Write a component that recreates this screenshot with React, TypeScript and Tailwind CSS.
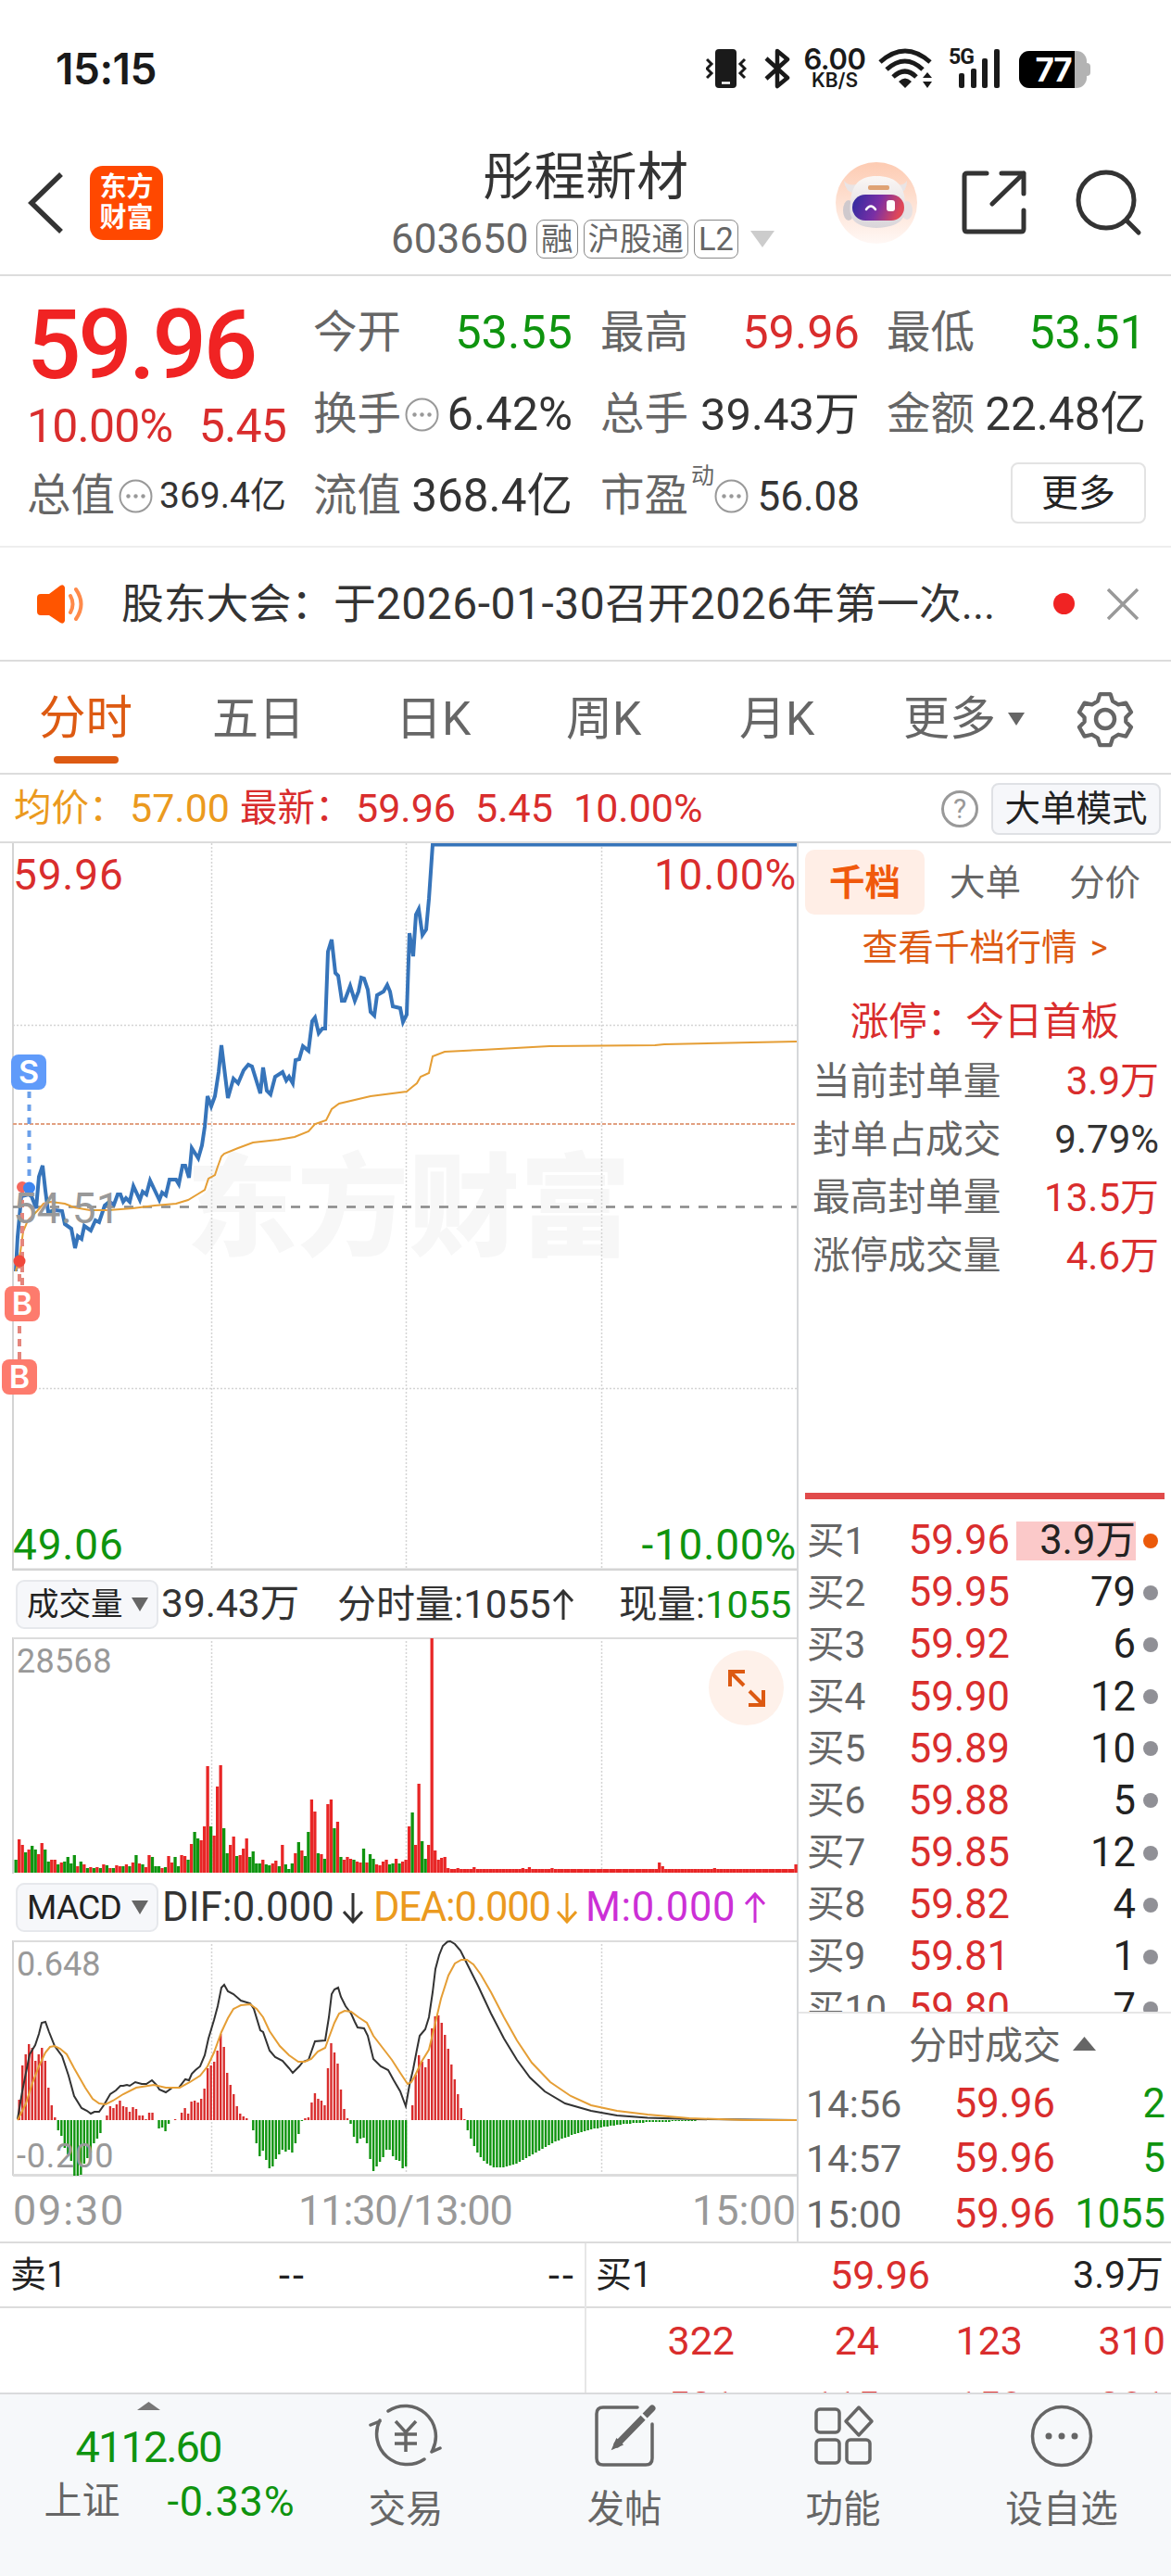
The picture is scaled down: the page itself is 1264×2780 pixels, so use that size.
import type { ReactNode } from "react";

const RED = "#d92d2d";
const GREEN = "#0f940f";

/** Volumen por minuto: positivo = rojo, negativo = verde. */
const VOLUME = [
  -14, 36, 30, -22, 25, -29, -25, 20, 32, -25, -12, 14, 14, -9, 11, -12, -17, -10, -19, 7, -12, 9, -5, 6, -5, 6, -5, 9, -8, 5,
  -5, 8, 7, -7, 9, -7, 11, -19, 10, -9, 6, 19, -17, -7, -7, 5, -6, 18, 11, -17, -7, 19, 18, -14, 31, -44, -37, 35, 50, 115,
  -50, 40, 93, 116, -48, -21, 30, 39, -18, 19, 26, 37, -17, -23, -10, -10, 14, -9, -8, 10, 13, -7, 30, -9, -4, -10, 21, -33, 24, -18,
  -44, 79, 66, -21, 20, -15, 74, 79, -48, 55, -17, 14, 17, 15, -14, 12, 11, -26, 11, -20, -15, 9, 8, 12, 14, -9, -10, 15, -10, 12,
  14, 50, -65, 30, 96, -34, -15, 30, 253, 24, 14, 16, 17, 5,
];

const VOLUME_BUMPS: Record<number, number> = { 136: 5, 141: 6, 156: 5, 158: 6, 165: 5, 198: 11, 199: 7, 215: 5, 240: 9 };

const MACD = [
  0, 22, 59, 71, 82, 78, 64, 71, 78, 64, 35, 16, 3, -11, -17, -30, -37, -44, -60, -60, -59, -47, -41, -35, -25, -20, -14, 0, 5, 15,
  13, 17, 21, 15, 14, 9, 14, 12, 5, 5, 1, 8, 8, 0, -9, -8, -12, -4, 0, 1, 0, 8, 13, 7, 20, 21, 19, 23, 34, 56,
  59, 63, 75, 93, 79, 51, 38, 28, 15, 7, 4, 2, 0, -11, -25, -39, -33, -43, -52, -50, -42, -37, -32, -34, -32, -35, -25, -15, -1, 2,
  3, 19, 29, 23, 21, 16, 56, 83, 73, 61, 33, 12, 2, -4, -18, -25, -20, -19, -25, -42, -55, -50, -45, -40, -32, -32, -39, -43, -44, -52,
  -50, 0, 16, 49, 70, 63, 57, 66, 99, 112, 113, 105, 92, 77, 60, 44, 28, 13, 1, -11, -20, -28, -35, -40, -44, -47, -49, -51, -51, -51,
  -51, -50, -49, -48, -47, -45, -43, -41, -39, -37, -35, -33, -31, -29, -27, -25, -23, -22, -20, -19, -18, -16, -15, -14, -13, -12, -11, -10, -9, -9,
  -8, -7, -7, -6, -6, -5, -5, -4, -4, -4, -3, -3, -3, -3, -2, -2, -2, -2, -2, -2, -2, -2, -1, -1, -1, -1, -1, -1, -1, -1,
];

const PRICE_LINE =
  "17,462 19,425 23,381 27,380 31,379 34,381 39,394 42,360 46,348 49,375 52,398 60,396 67,397 70,411 77,416 81,437 84,424 88,427 91,413 98,418 103,407 107,409 113,391 118,387 123,390 127,379 130,379 133,387 136,383 140,387 144,370 151,385 154,376 158,379 162,364 172,385 175,377 179,380 183,363 190,363 193,368 197,348 200,348 204,361 207,329 214,340 218,326 221,306 224,273 228,284 232,273 236,247 239,218 246,275 252,254 257,259 263,245 268,239 272,241 281,270 284,242 288,267 292,271 297,252 305,247 309,256 312,252 316,259 319,234 323,233 327,219 333,224 337,192 340,188 344,205 348,200 351,200 354,117 358,104 362,140 365,143 369,170 372,170 378,154 383,170 387,160 390,145 393,146 397,158 400,182 404,186 407,164 414,160 418,153 421,160 424,176 432,178 435,193 439,185 442,97 446,122 449,77 452,71 456,99 460,93 463,60 467,1.5 860,1.5";
const AVG_LINE =
  "17,462 22,441 25,419 30,407 40,397 47,389 55,387 70,389 80,393 97,396 117,396 143,394 167,391 190,389 203,385 213,379 221,374 225,362 232,358 235,349 239,338 242,335 257,329 273,323 300,320 318,317 333,311 340,303 352,299 358,287 366,281 400,273 439,268 445,263 450,259 454,252 463,248 467,230 480,225 520,223 593,219 707,218 717,217 860,214";
const DIF_LINE =
  "19,193 24,163 32,123 38,113 42,101 45,89 49,88 53,99 59,114 67,125 74,146 80,168 88,181 94,184 98,187 102,185 107,185 112,178 119,166 125,162 130,157 133,157 137,156 140,157 146,153 153,155 158,155 164,151 169,156 172,161 179,164 186,159 193,159 200,150 204,151 207,144 211,140 216,136 221,124 225,106 231,86 235,71 239,51 242,48 246,55 252,58 260,65 270,68 274,74 281,97 284,99 291,119 297,126 305,130 312,138 316,143 323,136 327,131 333,129 340,109 351,108 355,83 358,58 361,53 365,51 368,61 373,71 379,79 383,88 386,94 393,95 397,103 403,128 411,136 419,140 425,151 432,163 438,179 442,156 446,139 450,118 453,103 459,96 463,83 467,56 470,31 474,16 478,6 483,1.5 486,1 491,4 497,11 502,21 516,49 530,79 544,106 558,129 572,148 588,163 610,176 638,184 666,189 699,191.5 749,193 860,194";
const DEA_LINE =
  "19,194 28,176 35,154 42,136 49,121 54,115 59,114 65,117 72,123 80,138 92,159 100,171 107,176 114,177 122,173 133,166 147,159 166,156 179,159 194,159 205,153 216,146 224,136 231,121 239,99 246,84 252,74 260,70 270,69 277,74 284,83 291,98 302,114 312,124 322,131 329,131 336,128 343,120 351,116 355,105 361,89 366,79 372,76 379,77 387,83 396,89 403,103 413,116 423,129 432,143 440,155 444,153 448,146 455,131 463,118 469,93 476,63 484,38 491,25 498,21 504,21 511,26 519,37 530,56 544,83 558,108 574,132 594,153 616,168 638,178 666,184 699,188 744,192 805,194 860,194";

const BIDS = [
  ["买1", "59.96", "3.9万"],
  ["买2", "59.95", "79"],
  ["买3", "59.92", "6"],
  ["买4", "59.90", "12"],
  ["买5", "59.89", "10"],
  ["买6", "59.88", "5"],
  ["买7", "59.85", "12"],
  ["买8", "59.82", "4"],
  ["买9", "59.81", "1"],
  ["买10", "59.80", "7"],
];

const TRADES = [
  ["14:56", "59.96", "2"],
  ["14:57", "59.96", "5"],
  ["15:00", "59.96", "1055"],
];

const SEAL = [
  { label: "当前封单量", value: "3.9万", color: "text-[#d92d2d]" },
  { label: "封单占成交", value: "9.79%", color: "text-[#333]" },
  { label: "最高封单量", value: "13.5万", color: "text-[#d92d2d]" },
  { label: "涨停成交量", value: "4.6万", color: "text-[#d92d2d]" },
];

function StatusBar() {
  return (
    <div className="flex h-[150px] items-start pl-[60px] text-[#1a1a1a]">
      <div className="mt-[48px] w-[702px] font-['Inter'] text-[46px] leading-[52px] font-semibold tracking-[-0.5px]">15:15</div>
      <svg className="mt-[52px] h-[44px] w-[44px]" viewBox="0 0 44 44" fill="none" stroke="#1a1a1a" strokeWidth="3">
        <rect x="10" y="1" width="23" height="42" rx="4" fill="#1a1a1a" stroke="none" />
        <path d="M17 37.500h9" stroke="#fff" strokeWidth="2.500" />
        <path d="M1 12l5 5-5 5 5 5-5 5M42 12l-5 5 5 5-5 5 5 5" />
      </svg>
      <svg className="mt-[52px] ml-[19px] h-[44px] w-[28px]" viewBox="0 0 28 44" fill="none" stroke="#1a1a1a" strokeWidth="4.500" strokeLinejoin="round">
        <path d="M2 11l23 21-11 9V3l11 9L2 33" />
      </svg>
      <div className="mt-[49px] ml-[11px] flex w-[74px] flex-col items-center font-['Inter'] font-semibold">
        <span className="text-[31px] leading-[29px] tracking-[-0.4px]">6.00</span>
        <span className="text-[21px] leading-[18px]">KB/S</span>
      </div>
      <svg className="mt-[52px] ml-[10px] h-[44px] w-[60px]" viewBox="0 0 60 44" fill="none" stroke="#1a1a1a" strokeWidth="5">
        <path d="M2 15Q29-9 56 15M9 23Q29 5 48 23M16 31Q29 19 41 31" />
        <path d="M22 36q7-7 14 0l-7 7z" fill="#1a1a1a" stroke="none" />
        <path d="M48 32l5-6 5 6zM48 36h10l-5 7z" fill="#1a1a1a" stroke="none" />
      </svg>
      <div className="relative mt-[52px] ml-[16px] h-[44px] w-[58px]">
        <span className="absolute top-0 left-0 font-['Roboto'] text-[23px] leading-[20px] font-bold tracking-[-1px]">5G</span>
        <svg className="h-[44px] w-[58px]" viewBox="0 0 58 44" fill="#1a1a1a">
          <rect x="11" y="27" width="6" height="16" rx="2" />
          <rect x="24" y="22" width="6" height="21" rx="2" />
          <rect x="36" y="11" width="6" height="32" rx="2" />
          <rect x="49" y="1" width="6" height="42" rx="2" />
        </svg>
      </div>
      <div className="mt-[55px] ml-[18px] flex items-center">
        <div className="h-[40px] w-[73px] overflow-hidden rounded-[11px] bg-[#b3b3b3]">
          <div className="h-full w-[60px] bg-black pr-[4px] text-right font-['Inter'] text-[35px] leading-[41px] font-bold tracking-[-1.5px] text-white">77</div>
        </div>
        <div className="h-[14px] w-[4px] rounded-r-[4px] bg-[#b3b3b3]" />
      </div>
    </div>
  );
}

function Tag({ children }: { children: ReactNode }) {
  return (
    <span className="flex h-[42px] shrink-0 items-center rounded-[8px] border-[1.5px] border-[#888] px-[4px] text-[34.500px] leading-none whitespace-nowrap">{children}</span>
  );
}

function Robot() {
  return (
    <svg className="h-[88px] w-[88px]" viewBox="0 0 88 88">
      <defs>
        <linearGradient id="halo" x1="0" y1="0" x2="0" y2="1">
          <stop offset="0" stopColor="#fdcbb2" />
          <stop offset="1" stopColor="#fff8f5" />
        </linearGradient>
        <linearGradient id="visor" x1="0" y1="0" x2="1" y2="0.200">
          <stop offset="0" stopColor="#2b2ba0" />
          <stop offset="0.550" stopColor="#7a2fa5" />
          <stop offset="1" stopColor="#e04858" />
        </linearGradient>
        <linearGradient id="shell" x1="0" y1="0" x2="0" y2="1">
          <stop offset="0" stopColor="#fbf7f5" />
          <stop offset="1" stopColor="#d9d5da" />
        </linearGradient>
      </defs>
      <circle cx="44" cy="44" r="44" fill="url(#halo)" />
      <ellipse cx="14" cy="52" rx="6" ry="11" fill="#cfc9cd" />
      <ellipse cx="77" cy="52" rx="6" ry="10" fill="#e6e1e3" />
      <path d="M9 20q1 12 12 14l8-12q-14 6-20-2zM77 20q0 12-9 14l-8-12q12 6 17-2z" fill="#e9e4e5" />
      <path d="M44 15c20 0 30 9 31 28 3 18-6 27-31 28-22-1-31-9-28-27 1-20 10-29 28-29z" fill="url(#shell)" />
      <rect x="35" y="25" width="23" height="5" rx="2" fill="#dfa274" />
      <rect x="18" y="35" width="56" height="28" rx="14" fill="url(#visor)" />
      <path d="M33 51q5-7 10 0" fill="none" stroke="#fff" strokeWidth="2.500" strokeLinecap="round" />
      <rect x="55" y="41" width="9" height="12" rx="3" fill="#fff" />
    </svg>
  );
}

function Header() {
  return (
    <div className="flex h-[148px] items-start border-b-2 border-[#dcdcdc] text-[#333]">
      <svg className="mt-[36px] ml-[29px] h-[66px] w-[42px]" viewBox="0 0 42 66" fill="none" stroke="#333" strokeWidth="5.500">
        <path d="M37 2L5 33l32 31" />
      </svg>
      <div className="mt-[29px] ml-[26px] flex h-[80px] w-[79px] flex-col items-center justify-center rounded-[14px] bg-[#ff4800] text-[29px] leading-[33px] font-bold text-white">
        <span>东方</span>
        <span>财富</span>
      </div>
      <div className="ml-[246px] flex w-[424px] flex-col">
        <div className="mt-[12px] pl-[99px] text-[55.500px] leading-[60px]">彤程新材</div>
        <div className="mt-[13px] flex h-[46px] items-center text-[#666]">
          <span className="w-[157px] shrink-0 text-[44px] leading-none">603650</span>
          <div className="flex shrink-0 gap-[6px]">
            <Tag>融</Tag>
            <Tag>沪股通</Tag>
            <Tag>L2</Tag>
          </div>
          <svg className="ml-[13px] h-[18px] w-[26px] shrink-0" viewBox="0 0 26 18" fill="#ccc">
            <path d="M0 0h26L13 18z" />
          </svg>
        </div>
      </div>
      <div className="mt-[25px] ml-[56px]">
        <Robot />
      </div>
      <svg className="mt-[33px] ml-[48px] h-[70px] w-[70px]" viewBox="0 0 70 70" fill="none" stroke="#333" strokeWidth="5" strokeLinecap="round" strokeLinejoin="round">
        <path d="M27 4H6q-3 0-3 3v57q0 3 3 3h58q3 0 3-3V44M43 4h24v22M67 4L33 37" />
      </svg>
      <svg className="mt-[31px] ml-[51px] h-[74px] w-[74px]" viewBox="0 0 74 74" fill="none" stroke="#333" strokeWidth="5" strokeLinecap="round">
        <circle cx="35" cy="35" r="30" />
        <path d="M57 57l13 13" />
      </svg>
    </div>
  );
}

function MoreDot() {
  return (
    <svg className="ml-[4px] h-[37px] w-[37px] shrink-0" viewBox="0 0 37 37" fill="none" stroke="#999" strokeWidth="2">
      <circle cx="18.500" cy="18.500" r="17" />
      <g fill="#999" stroke="none">
        <circle cx="10.500" cy="18.500" r="2.200" />
        <circle cx="18.500" cy="18.500" r="2.200" />
        <circle cx="26.500" cy="18.500" r="2.200" />
      </g>
    </svg>
  );
}

function Stat({ label, value, color = "text-[#333]", size = "text-[50.500px]", info, sup }: { label: string; value: string; color?: string; size?: string; info?: boolean; sup?: string }) {
  return (
    <div className="flex h-[88px] w-[280px] items-center whitespace-nowrap">
      <span className="pt-[2px] text-[47.500px] text-[#666]">{label}</span>
      {sup && <span className="-mr-[4px] ml-[3px] self-start pt-[10px] text-[25px] leading-[26px] text-[#666]">{sup}</span>}
      {info && <MoreDot />}
      <span className={`ml-auto pt-[1px] ${size} ${color}`}>{value}</span>
    </div>
  );
}

function Quote() {
  return (
    <div className="flex h-[293px] border-b-2 border-[#eee] pt-[17px] pl-[29px] leading-none">
      <div className="flex w-[280px] flex-col">
        <span className="h-[106px] text-[103px] leading-[116px] font-medium tracking-[-3.4px] text-[#f02323]">59.96</span>
        <div className="flex h-[72px] items-center justify-between pt-[5px] text-[50px] tracking-[-0.8px] text-[#d92d2d]">
          <span>10.00%</span>
          <span>5.45</span>
        </div>
        <div className="-mt-[2px]">
          <Stat label="总值" value="369.4亿" size="text-[39px]" info />
        </div>
      </div>
      <div className="ml-[29px] flex flex-col">
        <Stat label="今开" value="53.55" color="text-[#0f940f]" />
        <Stat label="换手" value="6.42%" info />
        <Stat label="流值" value="368.4亿" size="text-[49.500px]" />
      </div>
      <div className="ml-[30px] flex flex-col">
        <Stat label="最高" value="59.96" color="text-[#d92d2d]" />
        <Stat label="总手" value="39.43万" size="text-[49px]" />
        <Stat label="市盈" value="56.08" size="text-[44px]" info sup="动" />
      </div>
      <div className="ml-[29px] flex flex-col">
        <Stat label="最低" value="53.51" color="text-[#0f940f]" />
        <Stat label="金额" value="22.48亿" size="text-[49.500px]" />
        <div className="mt-[8px] ml-auto flex h-[66px] w-[146px] items-center justify-center rounded-[8px] border-2 border-[#e3e3e3] pt-[2px] text-[40px] text-[#222]">更多</div>
      </div>
    </div>
  );
}

function Notice() {
  return (
    <div className="flex h-[123px] items-center border-b-2 border-[#dcdcdc] pl-[40px] text-[#333]">
      <svg className="h-[42px] w-[52px]" viewBox="0 0 52 42">
        <path d="M4 10h9L25 1q4-2 5 2v36q-1 4-5 2L13 33H4q-4 0-4-4V14q0-4 4-4z" fill="#ff5500" />
        <path d="M36 12q5 9 0 18M42 5q11 16 0 32" fill="none" stroke="#ff8a4a" strokeWidth="4" strokeLinecap="round" />
      </svg>
      <span className="ml-[39px] w-[1006px] text-[45.800px] leading-none whitespace-nowrap">
        股东大会：于<span className="text-[48px] tracking-[0.500px]">2026-01-30</span>召开<span className="text-[48px] tracking-[0.500px]">2026</span>年第一次...
      </span>
      <span className="h-[23px] w-[23px] rounded-full bg-[#f02323]" />
      <svg className="ml-[35px] h-[34px] w-[34px]" viewBox="0 0 34 34" stroke="#999" strokeWidth="3.500">
        <path d="M1 1l32 32M33 1L1 33" />
      </svg>
    </div>
  );
}

function PeriodTabs() {
  return (
    <div className="flex h-[122px] items-center border-b-2 border-[#dcdcdc] pt-[3px] text-[50px] leading-none text-[#666]">
      <div className="relative ml-[42px] w-[187px] text-[50.500px] text-[#dd5a12]">
        分时
        <span className="absolute top-[66px] left-[16px] h-[8px] w-[70px] rounded-full bg-[#dd5a12]" />
      </div>
      <span className="w-[198px]">五日</span>
      <span className="w-[184px]">日K</span>
      <span className="w-[187px]">周K</span>
      <span className="w-[177px]">月K</span>
      <span>更多</span>
      <svg className="ml-[13px] h-[14px] w-[18px]" viewBox="0 0 18 14" fill="#666">
        <path d="M0 0h18L9 14z" />
      </svg>
      <svg className="ml-[56px] h-[62px] w-[62px]" viewBox="0 0 62 62" fill="none" stroke="#666" strokeWidth="4.500" strokeLinejoin="round">
        <path d="M25 3h12l2.500 8 6.500 4 8.500-2 6 10.500-6 6v5l6 6-6 10.500-8.500-2-6.500 4-2.500 8H25l-2.500-8-6.500-4-8.500 2-6-10.500 6-6v-5l-6-6L7.500 13l8.500 2 6.500-4z" transform="translate(1.500 1.200) scale(.95)" />
        <circle cx="31" cy="31" r="10" />
      </svg>
    </div>
  );
}

function PriceBar() {
  return (
    <div className="flex h-[74px] items-center border-b-2 border-[#dcdcdc] pt-[1px] pl-[15px] text-[43px] leading-none whitespace-nowrap text-[#d92d2d]">
      <span className="w-[125px] text-[40.500px] text-[#eb9a1e]">均价：</span>
      <span className="w-[119px] text-[#eb9a1e]">57.00</span>
      <span className="w-[125px] text-[40.500px]">最新：</span>
      <span className="w-[129px]">59.96</span>
      <span className="w-[106px]">5.45</span>
      <span>10.00%</span>
      <div className="ml-auto flex h-[40px] w-[40px] items-center justify-center rounded-full border-[3px] border-[#999] text-[30px] text-[#999]">?</div>
      <div className="mr-[11px] ml-[14px] flex h-[56px] w-[183px] items-center justify-center rounded-[8px] border-2 border-[#dfe1e5] bg-[#f6f7fa] pt-[2px] text-[38.500px] text-[#222]">大单模式</div>
    </div>
  );
}

/** Cuadrícula vertical compartida por los tres gráficos. */
function VGrid({ h }: { h: number }) {
  return (
    <g stroke="#d4d4d4" strokeWidth="1.500">
      <path d={`M228.500 0V${h}M438.500 0V${h}M649.500 0V${h}`} strokeDasharray="2 2" />
      <path d={`M14 0V${h}`} strokeWidth="2" />
    </g>
  );
}

function Marker({ x, y, fill, children }: { x: number; y: number; fill: string; children: string }) {
  return (
    <g>
      <rect x={x} y={y} width="38" height="38" rx="8" fill={fill} />
      <text x={x + 19} y={y + 31} textAnchor="middle" fontSize="34" fontWeight="600" fill="#fff" fontFamily="Inter">
        {children}
      </text>
    </g>
  );
}

function PriceChart() {
  return (
    <div className="relative h-[785px] text-[46px] leading-[46px] tracking-[0.8px]">
      <svg className="block h-[785px] w-[861px] tracking-normal" viewBox="0 0 861 785" fill="none">
        <text x="201" y="436" fontSize="120" fontWeight="900" fill="#f7f7f7" fontFamily="Noto Sans CJK SC">
          东方财富
        </text>
        <VGrid h={785} />
        <path d="M14 196.500H860M14 588.500H860" stroke="#d4d4d4" strokeWidth="1.500" strokeDasharray="2 2" />
        <path d="M14 303H860" stroke="#e2a080" strokeWidth="2" strokeDasharray="4 2" />
        <path d="M14 392.500H860" stroke="#888" strokeWidth="2.500" strokeDasharray="10 10" />
        <path d="M14 784H860" stroke="#d4d4d4" strokeWidth="3" />
        <polyline points={PRICE_LINE} stroke="#3674ba" strokeWidth="4" />
        <polyline points={AVG_LINE} stroke="#e59e35" strokeWidth="2" />
        <path d="M31.500 268V366" stroke="#6ba0ea" strokeWidth="4" strokeDasharray="7 7" />
        <path d="M24 371V478M21 451V557" stroke="#e5857c" strokeWidth="4" strokeDasharray="8 6" />
        <circle cx="24" cy="371" r="6" fill="#f4685e" />
        <circle cx="31.500" cy="372" r="6.500" fill="#3f86f0" />
        <circle cx="21" cy="451" r="6.500" fill="#f0483c" />
        <Marker x={12} y={228} fill="#609bfa">S</Marker>
        <Marker x={5} y={478} fill="#fd7b6d">B</Marker>
        <Marker x={2} y={557} fill="#fd7b6d">B</Marker>
      </svg>
      <span className="absolute top-[11px] left-[14px] text-[#d92d2d]">59.96</span>
      <span className="absolute top-[11px] right-0 text-[#d92d2d]">10.00%</span>
      <span className="absolute top-[371px] left-[14px] tracking-normal text-[#999]">54.51</span>
      <span className="absolute top-[734px] left-[14px] text-[#0f940f]">49.06</span>
      <span className="absolute top-[734px] right-0 text-[#0f940f]">-10.00%</span>
    </div>
  );
}

function IndicatorPick({ children }: { children: string }) {
  return (
    <div className="flex h-[53px] w-[154px] items-center justify-between rounded-[9px] border-2 border-[#e6e8ec] bg-[#f6f7fa] pr-[9px] pl-[10px] text-[#222]">
      {children === "MACD" ? <span className="text-[37px] tracking-[-0.7px]">{children}</span> : <span className="text-[34.500px]">{children}</span>}
      <svg className="h-[15px] w-[18px]" viewBox="0 0 18 15" fill="#666">
        <path d="M0 0h18L9 15z" />
      </svg>
    </div>
  );
}

function Arrow({ down }: { down?: boolean }) {
  return (
    <svg className={`h-[34px] w-[22px] ${down ? "rotate-180" : ""}`} viewBox="0 0 22 34" fill="none" stroke="currentColor" strokeWidth="3">
      <path d="M11 33V3M1 13L11 2l10 11" />
    </svg>
  );
}

function VolumeChart() {
  const bars = Array.from({ length: 241 }, (_, i) => VOLUME[i] ?? VOLUME_BUMPS[i] ?? 4);
  return (
    <>
      <div className="flex h-[72px] items-center pt-[1px] pl-[17px] text-[42.500px] leading-none whitespace-nowrap text-[#333]">
        <IndicatorPick>成交量</IndicatorPick>
        <span className="ml-[3px] w-[190px]">39.43万</span>
        <span className="w-[233px] text-[42px]">分时量:1055</span>
        <Arrow />
        <span className="ml-[49px] text-[41.500px]">
          现量:<span className="text-[#0f940f]">1055</span>
        </span>
      </div>
      <div className="relative h-[255px]">
        <svg className="block h-[255px] w-[861px]" viewBox="0 0 861 255" fill="none">
          <VGrid h={255} />
          <path d="M14 1H860" stroke="#dcdcdc" strokeWidth="2" />
          {bars.map((v, i) => (
            <rect key={i} x={15.5 + i * 3.508} y={254 - Math.abs(v)} width={v > 4 || v < 0 ? 3.3 : 3.6} height={Math.abs(v)} fill={v > 0 ? "#e82626" : GREEN} />
          ))}
        </svg>
        <span className="absolute top-[8px] left-[18px] text-[36px] leading-[36px] tracking-[0.3px] text-[#999]">28568</span>
        <div className="absolute top-[14px] left-[765px] flex h-[81px] w-[81px] items-center justify-center rounded-full bg-[#fef1ea]">
          <svg className="h-[40px] w-[40px]" viewBox="0 0 40 40" fill="none" stroke="#dd5a12" strokeWidth="4">
            <path d="M2 18V2h16M3 3l14 14M38 22v16H22M37 37L23 23" />
          </svg>
        </div>
      </div>
    </>
  );
}

function MacdChart() {
  return (
    <>
      <div className="flex h-[72px] items-center pt-[1px] pl-[17px] text-[43.500px] leading-none whitespace-nowrap text-[#333]">
        <IndicatorPick>MACD</IndicatorPick>
        <span className="ml-[4px] w-[195px] tracking-[0.2px]">DIF:0.000</span>
        <Arrow down />
        <div className="ml-[11px] flex items-center text-[#eb9a1e]">
          <span className="w-[198px] tracking-[-1.2px]">DEA:0.000</span>
          <Arrow down />
        </div>
        <div className="ml-[9px] flex items-center text-[#cc2fd6]">
          <span className="w-[172px] tracking-[0.6px]">M:0.000</span>
          <Arrow />
        </div>
      </div>
      <div className="relative h-[255px] text-[36px] leading-[36px] text-[#999]">
        <svg className="block h-[255px] w-[861px]" viewBox="0 0 861 255" fill="none">
          <VGrid h={254} />
          <path d="M14 1H860" stroke="#dcdcdc" strokeWidth="2" />
          <path d="M14 253.500H860" stroke="#dcdcdc" strokeWidth="3" />
          {MACD.map((v, i) => (
            <rect key={i} x={16 + i * 3.508} y={v > 0 ? 194 - v : 194} width="2.400" height={Math.abs(v)} fill={v > 0 ? RED : GREEN} />
          ))}
          <polyline points={DIF_LINE} stroke="#333" strokeWidth="2" />
          <polyline points={DEA_LINE} stroke="#e59e35" strokeWidth="2" />
        </svg>
        <span className="absolute top-[8px] left-[18px]">0.648</span>
        <span className="absolute top-[215px] left-[18px] tracking-[0.8px]">-0.200</span>
      </div>
      <div className="flex h-[70px] items-center pt-[2px] pl-[14px] text-[45px] leading-none text-[#999]">
        <span className="w-[308px] tracking-[1.8px]">09:30</span>
        <span className="tracking-[-1.1px]">11:30/13:00</span>
        <span className="mr-[1px] ml-auto">15:00</span>
      </div>
    </>
  );
}

function OrderPanel() {
  return (
    <div className="flex w-[402px] flex-col leading-none whitespace-nowrap text-[#666]">
      <div className="mt-[7px] flex h-[70px] items-center pl-[7px] text-[38.500px]">
        <span className="flex h-[70px] w-[129px] items-center justify-center rounded-[10px] bg-[#ffeee6] pt-[2px] font-bold text-[#f0590c]">千档</span>
        <span className="w-[131px] pt-[2px] text-center">大单</span>
        <span className="w-[127px] pt-[2px] text-center">分价</span>
      </div>
      <div className="flex h-[70px] items-center justify-center gap-[14px] pt-[2px] text-[38.700px] text-[#dd5a12]">
        查看千档行情 <span className="text-[36px]">&gt;</span>
      </div>
      <div className="mt-[11px] flex h-[68px] items-center justify-center pt-[2px] text-[41.500px] text-[#d92d2d]">涨停：今日首板</div>
      {SEAL.map((r) => (
        <div key={r.label} className="flex h-[63px] items-center justify-between pr-[13px] pl-[15px] text-[40.700px]">
          <span>{r.label}</span>
          <span className={`text-[42px] ${r.color}`}>{r.value}</span>
        </div>
      ))}
      <div className="mt-[224px] ml-[7px] h-[7px] w-[388px] bg-[#e14b4b]" />
      <div className="mt-[17px] h-[538px] overflow-hidden text-[43.500px]">
        {BIDS.map(([level, price, qty], i) => (
          <div key={level} className="flex h-[56.100px] items-center pl-[9px]">
            <span className="w-[101px] text-[40.500px]">{level}</span>
            <span className="w-[118px] text-right text-[#d92d2d]">{price}</span>
            <span className={`ml-[7px] flex h-[42px] w-[129px] items-center justify-end text-[#222] ${i === 0 ? "bg-[#fbc9c9]" : ""}`}>{qty}</span>
            <span className={`ml-[8px] h-[16px] w-[16px] rounded-full ${i === 0 ? "bg-[#eb5a0a]" : "bg-[#909096]"}`} />
          </div>
        ))}
      </div>
      <div className="flex h-[70px] items-center justify-center gap-[13px] border-t-2 border-[#e6e6e6] pt-[2px] pl-[38px] text-[41px]">
        分时成交
        <svg className="-mt-[6px] h-[15px] w-[25px]" viewBox="0 0 25 15" fill="#666">
          <path d="M0 15h25L12.500 0z" />
        </svg>
      </div>
      {TRADES.map(([time, price, qty]) => (
        <div key={time} className="flex h-[59.400px] items-center pr-[6px] pl-[8px] text-[43.500px]">
          <span className="w-[106px] text-[41.500px]">{time}</span>
          <span className="w-[163px] text-right text-[#d92d2d]">{price}</span>
          <span className="ml-auto text-[#0f940f]">{qty}</span>
        </div>
      ))}
    </div>
  );
}

function DepthRows() {
  return (
    <div className="flex h-[163px] overflow-hidden border-t-2 border-[#dcdcdc] text-[43px] leading-none whitespace-nowrap text-[#222]">
      <div className="w-[633px] border-r-2 border-[#e6e6e6]">
        <div className="flex h-[70px] items-center border-b-2 border-[#dcdcdc] pt-[1px] pl-[11px]">
          <span className="w-[290px] text-[39px]">卖1</span>
          <span className="w-[291px] tracking-[3px]">--</span>
          <span className="tracking-[3px]">--</span>
        </div>
      </div>
      <div className="flex-1">
        <div className="flex h-[70px] items-center border-b-2 border-[#dcdcdc] pt-[1px] pr-[8px] pl-[10px]">
          <span className="w-[120px] text-[39px]">买1</span>
          <span className="w-[241px] text-right text-[#d92d2d]">59.96</span>
          <span className="ml-auto text-[41px]">3.9万</span>
        </div>
        {[
          ["322", "24", "123", "310"],
          ["521", "115", "150", "201"],
        ].map((row) => (
          <div key={row[0]} className="flex h-[70px] items-center pr-[6px] text-right text-[#d92d2d]">
            <span className="w-[160px]">{row[0]}</span>
            <span className="w-[156px]">{row[1]}</span>
            <span className="w-[155px]">{row[2]}</span>
            <span className="flex-1">{row[3]}</span>
          </div>
        ))}
      </div>
    </div>
  );
}

function NavItem({ label, children }: { label: string; children: ReactNode }) {
  return (
    <div className="flex w-[236px] flex-col items-center pt-[8px]">
      <svg className="h-[74px] w-[80px]" viewBox="0 0 80 74" fill="none" stroke="#666" strokeWidth="3.500" strokeLinecap="round">
        {children}
      </svg>
      <span className="mt-[22px] text-[40.500px] leading-[40px]">{label}</span>
    </div>
  );
}

function BottomNav() {
  return (
    <div className="flex h-[198px] border-t-2 border-[#d9dadc] bg-[#f6f8fa] text-[#666]">
      <div className="flex w-[320px] flex-col items-center leading-none">
        <svg className="mt-[8px] h-[9px] w-[25px]" viewBox="0 0 25 9" fill="#777">
          <path d="M0 9h25L12.500 0z" />
        </svg>
        <span className="mt-[16px] text-[47px] tracking-[-2px] text-[#0f940f]">4112.60</span>
        <div className="mt-[13px] ml-[46px] flex items-center gap-[51px]">
          <span className="text-[41px]">上证</span>
          <span className="text-[45px] tracking-[0.8px] text-[#0f940f]">-0.33%</span>
        </div>
      </div>
      <NavItem label="交易">
        <path d="M21 10A33 33 0 0 1 69 52L68 54M68 54l9-4M60 62A33 33 0 0 1 12 20M2 25l10-4" />
        <path d="M29 21l11 12 11-12M40 33v21M28 35h24M28 45h24" strokeLinecap="butt" />
      </NavItem>
      <NavItem label="发帖">
        <path d="M54 6H17q-7 0-7 7v48q0 7 7 7h46q7 0 7-7V24" />
        <path d="M70 7L32 46" strokeWidth="7" />
        <path d="M32 42l-3 7 7-3z" />
        <path d="M58 13l7 7" stroke="#f6f8fa" strokeWidth="3" />
      </NavItem>
      <NavItem label="功能">
        <rect x="11" y="8" width="25" height="25" rx="4" />
        <rect x="11" y="41" width="25" height="25" rx="4" />
        <rect x="44" y="41" width="25" height="25" rx="4" />
        <path d="M57 6l14 15-14 15-14-15z" strokeLinejoin="round" />
      </NavItem>
      <NavItem label="设自选">
        <circle cx="40" cy="37" r="31.500" />
        <g fill="#666" stroke="none">
          <circle cx="26" cy="37" r="3.500" />
          <circle cx="40" cy="37" r="3.500" />
          <circle cx="54" cy="37" r="3.500" />
        </g>
      </NavItem>
    </div>
  );
}

export default function App() {
  return (
    <div className="flex h-[2780px] w-[1264px] flex-col overflow-hidden bg-white font-['Roboto','Noto_Sans_CJK_SC',sans-serif]">
      <StatusBar />
      <Header />
      <Quote />
      <Notice />
      <PeriodTabs />
      <PriceBar />
      <div className="flex h-[1509px]">
        <div className="w-[862px] border-r-2 border-[#d6d8da]">
          <PriceChart />
          <VolumeChart />
          <MacdChart />
        </div>
        <OrderPanel />
      </div>
      <DepthRows />
      <BottomNav />
    </div>
  );
}
